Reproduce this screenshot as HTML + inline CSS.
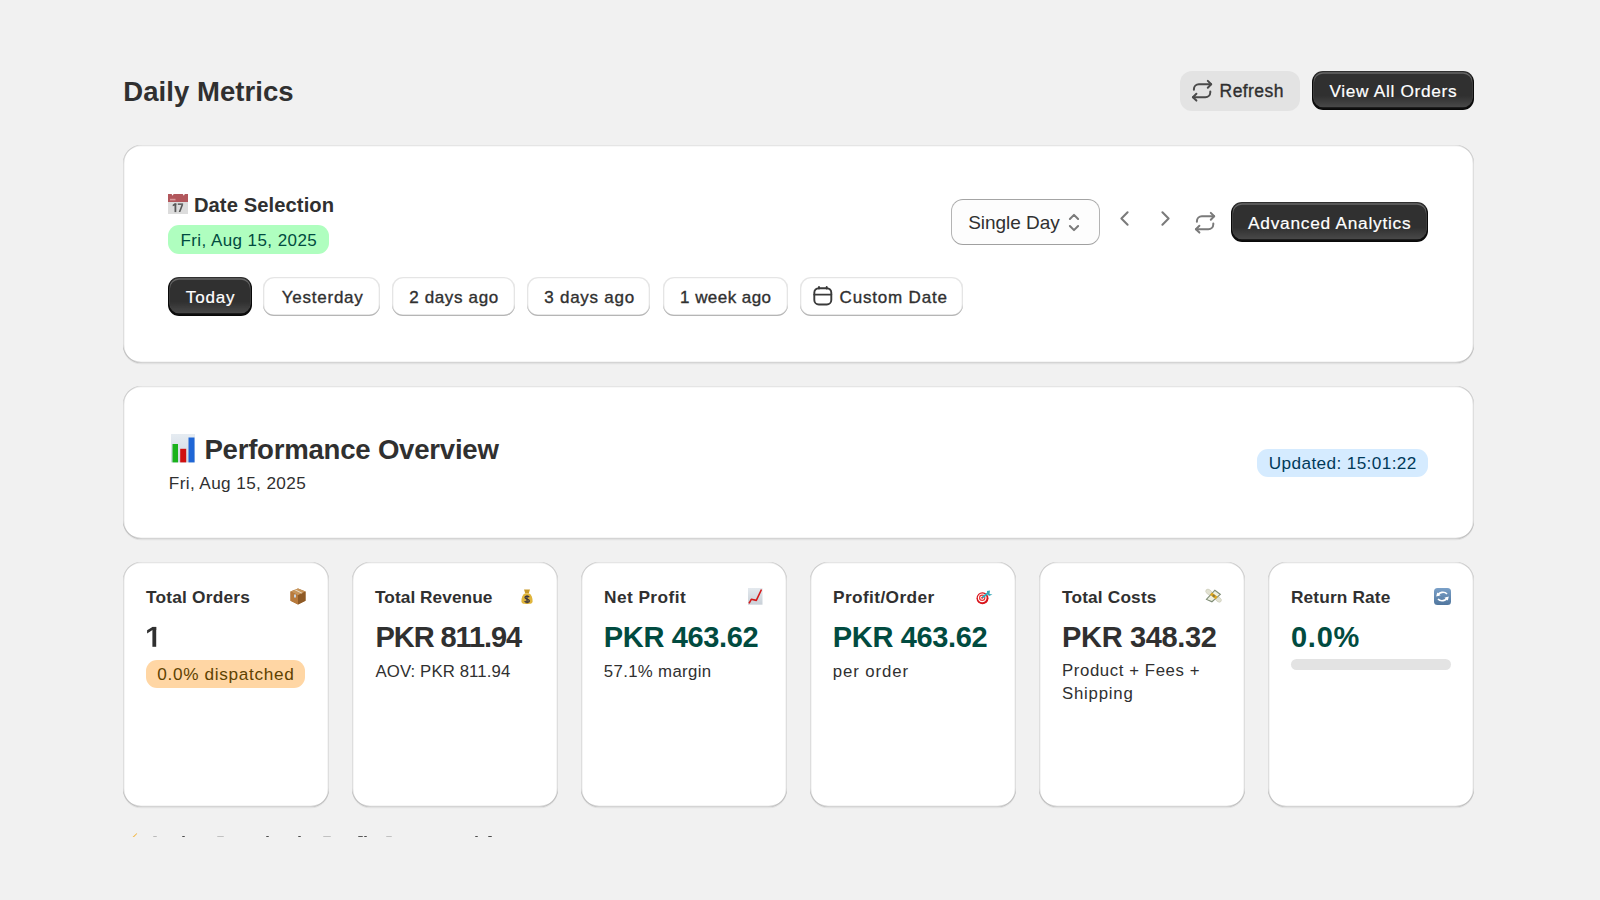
<!DOCTYPE html>
<html><head><meta charset="utf-8"><title>Daily Metrics</title>
<style>
html,body{margin:0;padding:0;width:1600px;height:900px;overflow:hidden;background:#f1f1f1;}
body{position:relative;font-family:"Liberation Sans",sans-serif;color:#303030;}
.t{position:absolute;white-space:nowrap;}
.ic{position:absolute;overflow:visible;}
.card{position:absolute;background:#fff;border-radius:18px;box-shadow:0 1.33px 0 0 rgba(26,26,26,0.07), inset 1.33px 0 0 0 rgba(0,0,0,0.13), inset -1.33px 0 0 0 rgba(0,0,0,0.13), inset 0 -1.33px 0 0 rgba(0,0,0,0.17), inset 0 1.33px 0 0 rgba(204,204,204,0.5);}
.btn-pri{position:absolute;border-radius:11px;background:linear-gradient(180deg, rgba(48,48,48,0) 63.53%, rgba(255,255,255,0.15) 100%), #303030;box-shadow:inset 0 -1.33px 0 1.33px rgba(0,0,0,0.8), inset 0 0 0 1.33px #303030, inset 0 0.67px 0 2px #666;}
.btn-sec{position:absolute;border-radius:11px;background:#fff;box-shadow:inset 0 -1.33px 0 0 #b5b5b5, inset 0 0 0 1.33px rgba(0,0,0,0.1), inset 0 0.67px 0 2px #fff;}
.btn-tert{position:absolute;border-radius:12px;background:#e3e3e3;}
.select{position:absolute;box-sizing:border-box;border-radius:11px;background:#fdfdfd;border:1px solid #b4b4b4;border-top-color:#a4a4a4;border-bottom-color:#a0a0a0;border-radius:12px;}
.badge{position:absolute;border-radius:11px;}
.bar{position:absolute;border-radius:6px;background:#e3e3e3;}
</style></head><body>
<div class="t" style="left:123.35px;top:74.00px;font-size:27.5px;line-height:36px;font-weight:700;color:#303030;letter-spacing:0.052px;">Daily Metrics</div>
<div class="btn-tert" style="left:1180px;top:71px;width:120px;height:39.5px;"></div>
<svg class="ic" style="left:1192px;top:80px;" width="20" height="21" viewBox="0 0 20 21"><g fill="none" stroke="#4a4a4a" stroke-width="2.0" stroke-linecap="round" stroke-linejoin="round"><path d="M1.9 9.8V9.3A5 5 0 0 1 6.9 4.3H19.1"/><path d="M15.8 0.9L19.2 4.3L15.8 7.7"/><path d="M18.3 11.6V12.3A5 5 0 0 1 13.3 17.3H1"/><path d="M4.4 13.8L0.9 17.3L4.4 20.6"/></g></svg>
<div class="t" style="left:1219.60px;top:80.00px;font-size:17.5px;line-height:23px;font-weight:400;color:#303030;letter-spacing:0.418px;-webkit-text-stroke:0.35px #303030;">Refresh</div>
<div class="btn-pri" style="left:1312px;top:71px;width:162px;height:39px;"></div>
<div class="t" style="left:1329.40px;top:80.00px;font-size:17.3px;line-height:22px;font-weight:400;color:#ffffff;letter-spacing:0.676px;-webkit-text-stroke:0.2px #ffffff;">View All Orders</div>
<div class="card" style="left:123px;top:145px;width:1351px;height:218px;"></div>
<svg class="ic" style="left:168.4px;top:193.8px;" width="20" height="20" viewBox="0 0 20 20"><rect x="0" y="0" width="20" height="20" fill="#dcdcdc"/><rect x="0" y="0" width="20" height="8" fill="#b2575c"/>
<path d="M3.6 0H5.6L4.6 1.8Z" fill="#fff"/><path d="M14.8 0H16.8L15.8 1.8Z" fill="#fff"/>
<rect x="2" y="4.8" width="5.5" height="1.6" fill="#d99a9c"/>
<g fill="#585858"><rect x="6.5" y="9.4" width="1.8" height="8.7"/><path d="M6.5 9.4H8.3V11L4.7 12.3V10.8Z"/><rect x="9.8" y="9.4" width="5.3" height="1.5"/><path d="M13.4 10.9H15.1L12.4 18.1H10.7Z"/></g></svg>
<div class="t" style="left:193.90px;top:192.00px;font-size:20.2px;line-height:26px;font-weight:700;color:#303030;letter-spacing:0.082px;">Date Selection</div>
<div class="badge" style="left:168.4px;top:225px;width:160.29999999999998px;height:28.599999999999994px;background:#affebf;"></div>
<div class="t" style="left:180.40px;top:230.00px;font-size:17.0px;line-height:22px;font-weight:400;color:#014b40;letter-spacing:0.431px;">Fri, Aug 15, 2025</div>
<div class="btn-pri" style="left:168.2px;top:277.2px;width:83.60000000000002px;height:39.30000000000001px;"></div>
<div class="t" style="left:185.80px;top:287.00px;font-size:17.0px;line-height:22px;font-weight:400;color:#ffffff;letter-spacing:0.863px;-webkit-text-stroke:0.2px #ffffff;">Today</div>
<div class="btn-sec" style="left:263.4px;top:277.2px;width:116.20000000000005px;height:39.30000000000001px;"></div>
<div class="t" style="left:281.80px;top:287.00px;font-size:17.0px;line-height:22px;font-weight:400;color:#303030;letter-spacing:0.754px;-webkit-text-stroke:0.35px #303030;">Yesterday</div>
<div class="btn-sec" style="left:392.2px;top:277.2px;width:122.50000000000006px;height:39.30000000000001px;"></div>
<div class="t" style="left:409.20px;top:287.00px;font-size:17.0px;line-height:22px;font-weight:400;color:#303030;letter-spacing:0.648px;-webkit-text-stroke:0.35px #303030;">2 days ago</div>
<div class="btn-sec" style="left:527.3px;top:277.2px;width:123.20000000000005px;height:39.30000000000001px;"></div>
<div class="t" style="left:544.30px;top:287.00px;font-size:17.0px;line-height:22px;font-weight:400;color:#303030;letter-spacing:0.736px;-webkit-text-stroke:0.35px #303030;">3 days ago</div>
<div class="btn-sec" style="left:662.8px;top:277.2px;width:124.90000000000009px;height:39.30000000000001px;"></div>
<div class="t" style="left:680.10px;top:287.00px;font-size:17.0px;line-height:22px;font-weight:400;color:#303030;letter-spacing:0.438px;-webkit-text-stroke:0.35px #303030;">1 week ago</div>
<div class="btn-sec" style="left:800.1px;top:277.2px;width:163.29999999999995px;height:39.30000000000001px;"></div>
<div class="t" style="left:839.60px;top:287.00px;font-size:17.0px;line-height:22px;font-weight:400;color:#303030;letter-spacing:0.810px;-webkit-text-stroke:0.35px #303030;">Custom Date</div>
<svg class="ic" style="left:812.5px;top:285.5px;" width="20" height="20" viewBox="0 0 20 20"><g fill="none" stroke="#3a3a3a" stroke-width="1.9" stroke-linecap="round"><rect x="1.3" y="2.2" width="17" height="16.3" rx="4.5"/><path d="M1.3 8.6H18.3"/><path d="M6 1V2.6M13.7 1V2.6"/></g></svg>
<div class="select" style="left:950.5px;top:199.4px;width:149.0px;height:45.29999999999998px;"></div>
<div class="t" style="left:968.20px;top:210.00px;font-size:19px;line-height:25px;font-weight:400;color:#303030;letter-spacing:-0.041px;">Single Day</div>
<svg class="ic" style="left:1067px;top:212px;" width="14" height="21" viewBox="0 0 14 21"><g fill="none" stroke="#7a7a7a" stroke-width="2.05" stroke-linecap="round" stroke-linejoin="round"><path d="M2.9 7L7 2.9L11.1 7"/><path d="M2.9 14L7 18.1L11.1 14"/></g></svg>
<svg class="ic" style="left:1119px;top:210px;" width="11" height="17" viewBox="0 0 11 17"><g fill="none" stroke="#7a7a7a" stroke-width="2.05" stroke-linecap="round" stroke-linejoin="round"><path d="M8.6 2.3L2.4 8.5L8.6 14.7"/></g></svg>
<svg class="ic" style="left:1160px;top:210px;" width="11" height="17" viewBox="0 0 11 17"><g fill="none" stroke="#7a7a7a" stroke-width="2.05" stroke-linecap="round" stroke-linejoin="round"><path d="M2.4 2.3L8.6 8.5L2.4 14.7"/></g></svg>
<svg class="ic" style="left:1195.1px;top:211.6px;" width="20" height="21" viewBox="0 0 20 21"><g fill="none" stroke="#7a7a7a" stroke-width="2.0" stroke-linecap="round" stroke-linejoin="round"><path d="M1.9 9.8V9.3A5 5 0 0 1 6.9 4.3H19.1"/><path d="M15.8 0.9L19.2 4.3L15.8 7.7"/><path d="M18.3 11.6V12.3A5 5 0 0 1 13.3 17.3H1"/><path d="M4.4 13.8L0.9 17.3L4.4 20.6"/></g></svg>
<div class="btn-pri" style="left:1231px;top:202.2px;width:197px;height:39.80000000000001px;"></div>
<div class="t" style="left:1248.00px;top:212.00px;font-size:17.3px;line-height:22px;font-weight:400;color:#ffffff;letter-spacing:0.751px;-webkit-text-stroke:0.2px #ffffff;">Advanced Analytics</div>
<div class="card" style="left:123px;top:386px;width:1351px;height:153px;"></div>
<svg class="ic" style="left:170.5px;top:434.2px;" width="24" height="28.4" viewBox="0 0 24 28.4"><defs><linearGradient id="cg" x1="0" y1="0" x2="0" y2="1"><stop offset="0" stop-color="#e6ecf2"/><stop offset="1" stop-color="#cfd8e2"/></linearGradient></defs>
<rect x="0" y="0" width="24" height="28.4" fill="url(#cg)"/>
<rect x="1.5" y="10" width="5.5" height="18.4" fill="#19b21c"/><rect x="9.2" y="14.8" width="6" height="13.6" fill="#d01010"/><rect x="17.5" y="3.5" width="6" height="24.9" fill="#1f66d6"/></svg>
<div class="t" style="left:204.40px;top:432.00px;font-size:27.6px;line-height:36px;font-weight:700;color:#303030;letter-spacing:-0.240px;">Performance Overview</div>
<div class="t" style="left:168.80px;top:472.00px;font-size:17.2px;line-height:22px;font-weight:400;color:#303030;letter-spacing:0.380px;">Fri, Aug 15, 2025</div>
<div class="badge" style="left:1257px;top:448.6px;width:171.4000000000001px;height:28.19999999999999px;background:#d5ebff;"></div>
<div class="t" style="left:1268.80px;top:452.00px;font-size:17.2px;line-height:22px;font-weight:400;color:#003a5a;letter-spacing:0.378px;">Updated: 15:01:22</div>
<div class="card" style="left:123px;top:562px;width:206px;height:245px;"></div>
<div class="t" style="left:146.00px;top:586.00px;font-size:17.3px;line-height:22px;font-weight:700;color:#303030;letter-spacing:0.210px;">Total Orders</div>
<div class="card" style="left:352px;top:562px;width:206px;height:245px;"></div>
<div class="t" style="left:375.00px;top:586.00px;font-size:17.3px;line-height:22px;font-weight:700;color:#303030;letter-spacing:0.046px;">Total Revenue</div>
<div class="card" style="left:581px;top:562px;width:206px;height:245px;"></div>
<div class="t" style="left:604.00px;top:586.00px;font-size:17.3px;line-height:22px;font-weight:700;color:#303030;letter-spacing:0.439px;">Net Profit</div>
<div class="card" style="left:810px;top:562px;width:206px;height:245px;"></div>
<div class="t" style="left:833.00px;top:586.00px;font-size:17.3px;line-height:22px;font-weight:700;color:#303030;letter-spacing:0.382px;">Profit/Order</div>
<div class="card" style="left:1039px;top:562px;width:206px;height:245px;"></div>
<div class="t" style="left:1062.00px;top:586.00px;font-size:17.3px;line-height:22px;font-weight:700;color:#303030;letter-spacing:0.160px;">Total Costs</div>
<div class="card" style="left:1268px;top:562px;width:206px;height:245px;"></div>
<div class="t" style="left:1291.00px;top:586.00px;font-size:17.3px;line-height:22px;font-weight:700;color:#303030;letter-spacing:0.135px;">Return Rate</div>
<svg class="ic" style="left:140px;top:620px;" width="30" height="32" viewBox="0 0 30 32"><g fill="#303030"><rect x="12.4" y="6.9" width="3.8" height="19.9"/><path d="M12.4 6.9H16.2V10.1H12.5L7.1 13.6V10.2Z"/></g></svg>
<div class="badge" style="left:145.6px;top:659.7px;width:159.9px;height:28.199999999999932px;background:#ffd6a4;"></div>
<div class="t" style="left:157.30px;top:663.00px;font-size:17.2px;line-height:22px;font-weight:400;color:#5e4200;letter-spacing:0.665px;">0.0% dispatched</div>
<div class="t" style="left:375.50px;top:618.00px;font-size:29px;line-height:38px;font-weight:700;color:#303030;letter-spacing:-1.076px;">PKR 811.94</div>
<div class="t" style="left:375.50px;top:661.00px;font-size:16.8px;line-height:22px;font-weight:400;color:#303030;letter-spacing:0.096px;">AOV: PKR 811.94</div>
<div class="t" style="left:603.80px;top:618.00px;font-size:29px;line-height:38px;font-weight:700;color:#014b40;letter-spacing:-0.353px;">PKR 463.62</div>
<div class="t" style="left:603.80px;top:661.00px;font-size:16.8px;line-height:22px;font-weight:400;color:#303030;letter-spacing:0.340px;">57.1% margin</div>
<div class="t" style="left:832.80px;top:618.00px;font-size:29px;line-height:38px;font-weight:700;color:#014b40;letter-spacing:-0.353px;">PKR 463.62</div>
<div class="t" style="left:832.80px;top:661.00px;font-size:16.8px;line-height:22px;font-weight:400;color:#303030;letter-spacing:0.892px;">per order</div>
<div class="t" style="left:1062.10px;top:618.00px;font-size:29px;line-height:38px;font-weight:700;color:#303030;letter-spacing:-0.364px;">PKR 348.32</div>
<div class="t" style="left:1062.00px;top:660.00px;font-size:16.8px;line-height:22px;font-weight:400;color:#303030;letter-spacing:0.590px;">Product + Fees +</div>
<div class="t" style="left:1062.00px;top:683.00px;font-size:16.8px;line-height:22px;font-weight:400;color:#303030;letter-spacing:0.772px;">Shipping</div>
<div class="t" style="left:1290.90px;top:618.00px;font-size:29px;line-height:38px;font-weight:700;color:#014b40;letter-spacing:0.793px;">0.0%</div>
<div class="bar" style="left:1290.6px;top:658.9px;width:160.9000000000001px;height:10.800000000000068px;"></div>
<svg class="ic" style="left:289.8px;top:587.8px;" width="16" height="16.6" viewBox="0 0 16 16.6"><path d="M8 0.5L15.5 3.6V12.8L8 16.6L0.5 12.8V3.6Z" fill="#a0682e"/>
<path d="M0.5 3.6L8 7.2L15.5 3.6L8 0.5Z" fill="#c8955a"/>
<path d="M0.5 3.6L8 7.2V16.6L0.5 12.8Z" fill="#b87a3c"/>
<path d="M8 7.2L15.5 3.6V12.8L8 16.6Z" fill="#8e5a26"/>
<path d="M4.5 2L11.5 5.4L12.5 4.9L5.6 1.6Z" fill="#e8dcc8"/>
<rect x="4" y="6.5" width="2" height="3" fill="#c8d4e0"/></svg>
<svg class="ic" style="left:521px;top:588.7px;" width="12" height="15" viewBox="0 0 12 15"><path d="M3 0.5H9L7.8 4.2H4.2Z" fill="#c99a2a"/>
<path d="M4.2 4.2H7.8C10.5 5.5 11.8 9 11.6 12.5C11.5 14.2 10 15 6 15C2 15 0.5 14.2 0.4 12.5C0.2 9 1.5 5.5 4.2 4.2Z" fill="#e0b53c"/>
<path d="M8.2 8.2C7.8 7.4 6.9 7.1 6 7.1C4.9 7.1 4 7.7 4 8.6C4 10.6 8.3 9.8 8.3 11.8C8.3 12.8 7.3 13.4 6.1 13.4C5 13.4 4.1 13 3.7 12.1M6 6.2V14.2" fill="none" stroke="#3a3540" stroke-width="1.3"/></svg>
<svg class="ic" style="left:748.4px;top:588px;" width="14.5" height="16.7" viewBox="0 0 14.5 16.7"><defs><linearGradient id="ug" x1="0" y1="0" x2="0" y2="1"><stop offset="0" stop-color="#e4e9ee"/><stop offset="1" stop-color="#c9d0d8"/></linearGradient></defs>
<rect x="0" y="0" width="14.5" height="16.7" fill="url(#ug)"/>
<path d="M1 15.5L3.3 11.3L8.3 12.4L13.5 1.5" fill="none" stroke="#d41a1a" stroke-width="1.6" stroke-linejoin="round"/></svg>
<svg class="ic" style="left:976px;top:590.3px;" width="17" height="14.4" viewBox="0 0 17 14.4"><ellipse cx="6.5" cy="8.2" rx="6" ry="6" fill="#d8141b"/><ellipse cx="6.2" cy="7.8" rx="4.4" ry="4.4" fill="#fff"/>
<ellipse cx="6.2" cy="7.8" rx="3.2" ry="3.2" fill="#e33"/><ellipse cx="6.2" cy="7.8" rx="2" ry="2" fill="#fff"/><circle cx="6.2" cy="7.8" r="1" fill="#d8141b"/>
<path d="M6.5 7.5L12 3" stroke="#2ab0c0" stroke-width="1.8"/><path d="M11 1L14 0.5L13.5 4L16.5 4.5L13 6L11 3.5Z" fill="#3aa8b8"/></svg>
<svg class="ic" style="left:1205.1px;top:588.4px;" width="16.7" height="15" viewBox="0 0 16.7 15"><ellipse cx="4" cy="4.2" rx="3.7" ry="2.4" transform="rotate(40 4 4.2)" fill="#e2e2d2" stroke="#c4c4b0" stroke-width="0.5"/>
<ellipse cx="13.3" cy="11.3" rx="3.5" ry="2.3" transform="rotate(40 13.3 11.3)" fill="#e2e2d2" stroke="#c4c4b0" stroke-width="0.5"/>
<path d="M0.6 11.6L9.8 1.6L16.2 6.2L7 14.6Z" fill="#7d8b74"/><path d="M2.2 11.3L9.9 3L14.5 6.4L6.9 13.1Z" fill="#eef0e0"/>
<path d="M6 5.6L11.6 10" stroke="#e0a81e" stroke-width="3"/><rect x="7.6" y="6.7" width="2.3" height="2.3" fill="#8a7a40" transform="rotate(40 8.75 7.85)"/></svg>
<svg class="ic" style="left:1434px;top:587.8px;" width="17" height="17" viewBox="0 0 17 17"><defs><linearGradient id="bg2" x1="0" y1="0" x2="0" y2="1"><stop offset="0" stop-color="#7aa0c8"/><stop offset="1" stop-color="#50769e"/></linearGradient></defs>
<rect x="0" y="0" width="17" height="17" rx="3.5" fill="url(#bg2)"/>
<path d="M4 7.5A5 4 0 0 1 13 6" fill="none" stroke="#fff" stroke-width="1.7"/><path d="M2.2 8.6L3.2 4.5L6.6 7.2Z" fill="#fff"/>
<path d="M13 9.5A5 4 0 0 1 4 11" fill="none" stroke="#fff" stroke-width="1.7"/><path d="M14.8 8.4L13.8 12.5L10.4 9.8Z" fill="#fff"/></svg>
<svg class="ic" style="left:132px;top:833px;" width="6" height="4" viewBox="0 0 6 4"><path d="M4.6 0.3L5.2 0.8L2 4H0.6Z" fill="#f2b43a"/></svg>
<div class="t" style="left:153px;top:835.8px;width:3.9000000000000057px;height:1.2px;background:#b0b0b0;border-radius:1px 1px 0 0;opacity:.85"></div>
<div class="t" style="left:181.9px;top:835.5px;width:3.0999999999999943px;height:1.5px;background:#303030;border-radius:1px 1px 0 0;opacity:.85"></div>
<div class="t" style="left:216.9px;top:835.8px;width:7.5px;height:1.2px;background:#b8b8b8;border-radius:1px 1px 0 0;opacity:.85"></div>
<div class="t" style="left:265.6px;top:835.5px;width:3.7999999999999545px;height:1.5px;background:#303030;border-radius:1px 1px 0 0;opacity:.85"></div>
<div class="t" style="left:298px;top:835.8px;width:3px;height:1.2px;background:#303030;border-radius:1px 1px 0 0;opacity:.85"></div>
<div class="t" style="left:323px;top:835.8px;width:8.300000000000011px;height:1.2px;background:#b8b8b8;border-radius:1px 1px 0 0;opacity:.85"></div>
<div class="t" style="left:358px;top:835.8px;width:4.5px;height:1.2px;background:#404040;border-radius:1px 1px 0 0;opacity:.85"></div>
<div class="t" style="left:363.8px;top:835.5px;width:3.5px;height:1.5px;background:#303030;border-radius:1px 1px 0 0;opacity:.85"></div>
<div class="t" style="left:385.6px;top:835.8px;width:6.2999999999999545px;height:1.2px;background:#b8b8b8;border-radius:1px 1px 0 0;opacity:.85"></div>
<div class="t" style="left:475px;top:835.5px;width:3px;height:1.5px;background:#303030;border-radius:1px 1px 0 0;opacity:.85"></div>
<div class="t" style="left:488px;top:835.5px;width:3.5px;height:1.5px;background:#303030;border-radius:1px 1px 0 0;opacity:.85"></div>
</body></html>
